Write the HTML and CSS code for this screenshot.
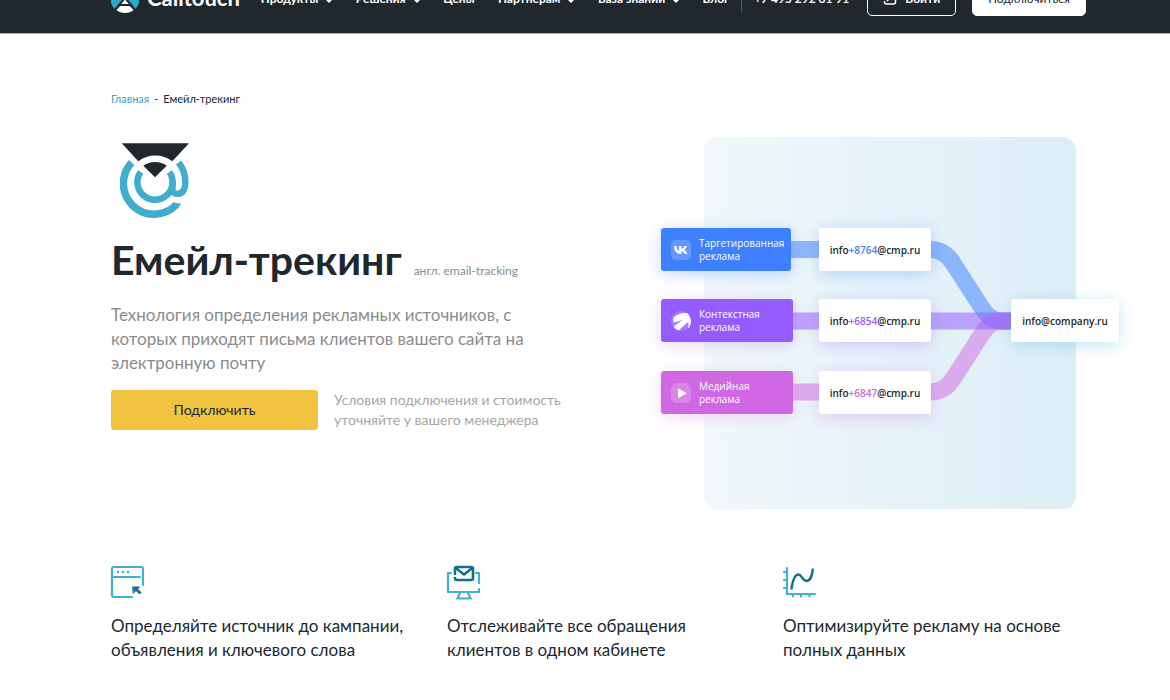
FILE: index.html
```html
<!DOCTYPE html>
<html lang="ru">
<head>
<meta charset="utf-8">
<title>Емейл-трекинг</title>
<link rel="stylesheet" href="styles.css">
</head>
<body>
<header class="header">
  <div class="header-inner">
    <a class="logo" href="#">
      <svg class="logo-mark" viewBox="0 0 28 28" aria-hidden="true">
        <circle cx="14" cy="14" r="14" fill="#fff"/>
        <path d="M14 14 4 4A14 14 0 0 0 4.500 24.500ZM14 14 24 4A14 14 0 0 1 23.500 24.500Z" fill="#2ba9c9"/>
        <path d="M3 2 25 26M25 2 3 26" stroke="#20282e" stroke-width="2.500"/>
        <path d="M14 13 20 20H8Z" fill="#fff" stroke="#20282e" stroke-width="2"/>
      </svg>
      <span>Calltouch</span>
    </a>
    <nav class="nav">
      <a class="has-menu" href="#">Продукты</a>
      <a class="has-menu" href="#">Решения</a>
      <a href="#">Цены</a>
      <a class="has-menu" href="#">Партнерам</a>
      <a class="has-menu" href="#">База знаний</a>
      <a href="#">Блог</a>
    </nav>
    <a class="phone" href="tel:+74952926191">+7 495 292 61 91</a>
    <button class="btn btn-login" type="button">
      <svg viewBox="0 0 14 14" width="14" height="14" fill="none" stroke="#fff" stroke-width="1.500" aria-hidden="true"><path d="M1.500 5V3q0-2 2-2h7q2 0 2 2v8q0 2-2 2h-7q-2 0-2-2v-1M4 10l4-4M5 6h3v3"/></svg>
      <span>Войти</span>
    </button>
    <button class="btn btn-join" type="button">Подключиться</button>
  </div>
</header>

<main class="page">
  <nav class="crumbs"><a href="#">Главная</a><span>-</span><span>Емейл-трекинг</span></nav>

  <section class="hero">
    <div class="hero-text">
      <svg class="hero-icon" viewBox="0 0 70 76" aria-hidden="true">
        <path d="M1.700 1.300H69L52.300 19.300A28 28 0 0 0 18.300 19.300Z" fill="#20282e"/>
        <path d="M35 35.300 23.300 23.800A20 20 0 0 1 46.700 23.800Z" fill="#20282e"/>
        <g fill="none" stroke="#3fadcd">
          <path stroke-width="7.500" d="M11.700 20.500A30.400 30.400 0 0 0 56.500 62.500"/>
          <path stroke-width="6.500" d="M20.600 30A17.600 17.600 0 1 0 49.400 30"/>
          <path stroke-width="6.500" d="M52.500 40V48C52.500 51 55.500 52 58.500 51.700C63.500 51.200 65.300 46 65.300 40.500A31 31 0 0 0 58.500 20.500"/>
        </g>
        <path d="M53.500 60Q57 61.800 61.500 61.300Q60 63.500 57.500 66L53 63Z" fill="#3fadcd"/>
      </svg>
      <div class="title-row">
        <h1>Емейл-трекинг</h1>
        <span class="title-note">англ. email-tracking</span>
      </div>
      <p class="lead">Технология определения рекламных источников, с которых приходят письма клиентов вашего сайта на электронную почту</p>
      <div class="cta-row">
        <button class="cta" type="button">Подключить</button>
        <p class="cta-note">Условия подключения и стоимость уточняйте у вашего менеджера</p>
      </div>
    </div>

    <div class="diagram">
      <svg class="pipes" viewBox="0 0 372 372" fill="none" stroke-width="17" aria-hidden="true">
        <path stroke="#3f80ff" stroke-opacity=".53" d="M80 112.500H226C236 112.500 244 118 249 126L276 168C283 179 288 184 299 184H320"/>
        <path stroke="#d067e3" stroke-opacity=".5" d="M80 255H226C236 255 244 250 249 242L276 200C283 189 288 184 299 184H320"/>
        <path stroke="#945cff" stroke-opacity=".53" d="M80 184H320"/>
      </svg>
      <div class="node source vk">
        <svg viewBox="0 0 20 20" aria-hidden="true"><rect width="20" height="20" rx="5" fill="#fff" fill-opacity=".2"/><path d="M3 6h2.600c.1 3.200 1.300 4.700 2.500 5V6h2.400v2.900c1.300-.2 2.400-1.500 2.900-2.900h2.400c-.4 1.800-1.600 3.100-2.600 3.900 1.200.6 2.600 1.800 3.200 4h-2.700c-.5-1.500-1.600-2.500-3.200-2.700v2.700h-.4C5.700 13.900 3.200 11.100 3 6Z" fill="#fff"/></svg>
        <span>Таргетированная реклама</span>
      </div>
      <div class="node source context">
        <svg viewBox="0 0 20 20" aria-hidden="true"><circle cx="10" cy="10" r="10" fill="#fff" fill-opacity=".2"/><path d="M3 6C7 3 12 1.500 16.500 2.300 19 5 20.500 9 19.700 12.500 19 15 18 17 16.700 17.700 17.600 15 18 12.500 17 11L7.500 19.500Q4 18.500 2.800 15.500L11.500 9 3.200 11.500Q1.500 9 3 6Z" fill="#fff"/></svg>
        <span>Контекстная реклама</span>
      </div>
      <div class="node source media">
        <svg viewBox="0 0 20 20" aria-hidden="true"><rect width="20" height="20" rx="6" fill="#fff" fill-opacity=".2"/><path d="M7.500 6v8.500L15 10.200Z" fill="#fff" stroke="#fff" stroke-linejoin="round"/></svg>
        <span>Медийная реклама</span>
      </div>
      <div class="node mail mail-vk">info<b>+8764</b>@cmp.ru</div>
      <div class="node mail mail-context">info<b>+6854</b>@cmp.ru</div>
      <div class="node mail mail-media">info<b>+6847</b>@cmp.ru</div>
      <div class="node mail mail-main">info@company.ru</div>
    </div>
  </section>

  <section class="features">
    <article class="feature">
      <svg viewBox="0 0 34 34" fill="none" stroke="#3fb0d0" stroke-width="2.200" stroke-linecap="round" aria-hidden="true">
        <path d="M32 19V3q0-2-2-2H3Q1 1 1 3v26q0 2 2 2h18M2 11h27"/>
        <path d="M7 6h.1M12 6h.1M17 6h.1" stroke-width="2.400"/>
        <path d="M22 21H28.500L26.500 23 30 26.500 28.500 28 25 24.500 22.500 27Z" fill="#156f8c" stroke="#156f8c" stroke-width="1"/>
      </svg>
      <h2>Определяйте источник до кампании, объявления и ключевого слова</h2>
    </article>
    <article class="feature">
      <svg viewBox="0 0 34 34" fill="none" stroke="#3fb0d0" stroke-width="2.200" stroke-linecap="round" stroke-linejoin="round" aria-hidden="true">
        <path d="M4 7H1v19h31v-3M29 7h3v10M13 27l-2.500 5.500h13L21 27M10 32.500h14"/>
        <path d="M8 8V3q0-2 2-2h14q2 0 2 2v9q0 2-2 2H10q-2 0-2-2M10 3l7 5.500L24 3" stroke="#156f8c" stroke-width="2.600"/>
      </svg>
      <h2>Отслеживайте все обращения клиентов в одном кабинете</h2>
    </article>
    <article class="feature">
      <svg viewBox="0 0 34 34" fill="none" stroke="#3fb0d0" stroke-width="2.200" stroke-linecap="round" aria-hidden="true">
        <path d="M4 2v26h28M1 6h3M1 14h3M1 22h3M10 28v2.500M18 28v2.500M26.500 28v2.500"/>
        <path d="M8.500 22.500C10 13 12 8.500 15.500 8.500S19 15 23.500 15 29 9 29.800 3.500" stroke="#156f8c" stroke-width="2.400"/>
      </svg>
      <h2>Оптимизируйте рекламу на основе полных данных</h2>
    </article>
  </section>
</main>
</body>
</html>
```
FILE: styles.css
```css
* { box-sizing: border-box; }
body {
  margin: 0;
  background: #fff;
  color: #20282e;
  font-family: Lato, "Noto Sans", sans-serif;
  overflow: hidden;
}
h1, h2, p { margin: 0; }
a { color: inherit; text-decoration: none; }
button { font: inherit; cursor: pointer; }

/* The bar is partly scrolled out of view */
.header {
  margin-top: -35px;
  border-bottom: 1px solid #a6a9ab;
  background: #20282e;
  color: #fff;
}
.header-inner {
  display: flex;
  align-items: center;
  height: 68px;
  padding: 0 84px 0 111px;
  white-space: nowrap;
}
.logo {
  display: flex;
  align-items: center;
  gap: 8px;
  font-size: 22px;
  line-height: 26px;
  font-weight: 700;
}
.logo-mark { width: 28px; height: 28px; }
.logo span { padding-bottom: 3px; }
.nav {
  display: flex;
  flex: 1;
  justify-content: space-between;
  margin: 0 12px 0 21px;
  padding-bottom: 2px;
  font-size: 12px;
  font-weight: 700;
}
.has-menu::after {
  content: "";
  display: inline-block;
  margin-left: 8px;
  border: 3px solid transparent;
  border-top-color: #fff;
  border-bottom: 0;
}
.phone {
  padding: 4px 18px 6px 12px;
  border-left: 1px solid #535a5f;
  font-size: 12px;
  font-weight: 700;
}
.btn {
  display: flex;
  align-items: center;
  justify-content: center;
  gap: 8px;
  height: 34px;
  padding: 0 15px 2px;
  border: 1px solid #fff;
  border-radius: 5px;
  background: transparent;
  color: #fff;
  font-size: 12px;
}
.btn-login { font-weight: 700; }
.btn-join { margin-left: 16px; background: #fff; color: #20282e; }

.page { padding: 0 84px 0 111px; }
.crumbs {
  display: flex;
  gap: 5px;
  padding-top: 57px;
  font-size: 11px;
  line-height: 16px;
}
.crumbs a { color: #3fa3c6; }

.hero {
  display: flex;
  justify-content: space-between;
  padding: 30px 10px 0 0;
}
.hero-text { width: 460px; padding-top: 5px; }
.hero-icon { display: block; width: 70px; height: 76px; margin-left: 9px; }
.title-row {
  display: flex;
  align-items: baseline;
  gap: 12px;
  margin-top: 18px;
  white-space: nowrap;
}
h1 { font-size: 41px; line-height: 48px; font-weight: 700; }
.title-note { color: #8c8c8c; font-size: 12px; }
.lead {
  width: 430px;
  margin-top: 19px;
  color: #8c8c8c;
  font-size: 17px;
  line-height: 24px;
}
.cta-row { display: flex; align-items: center; gap: 16px; margin-top: 15px; }
.cta {
  flex: none;
  width: 207px;
  height: 40px;
  padding: 0 0 2px;
  border: 0;
  border-radius: 3px;
  background: #f2c341;
  color: #20282e;
  font-size: 14px;
}
.cta-note { color: #a6a6a6; font-size: 14px; line-height: 20px; }

.diagram {
  position: relative;
  flex: none;
  width: 372px;
  height: 372px;
  border-radius: 13px;
  background: linear-gradient(90deg, #f2f8f9, #e7f3f9 45%, #ddeef7);
}
.pipes { position: absolute; inset: 0; width: 100%; height: 100%; }
.node {
  position: absolute;
  display: flex;
  align-items: center;
  height: 43px;
  border-radius: 3px;
  font-family: "Open Sans", "Noto Sans", sans-serif;
  font-size: 10px;
}
.source {
  left: -43px;
  width: 132px;
  gap: 8px;
  padding: 0 0 0 10px;
  color: #fff;
  line-height: 13px;
}
.source svg { flex: none; width: 20px; height: 20px; }
.source span { width: 90px; }
.vk { top: 91px; width: 130px; background: #3f80ff; box-shadow: 0 3px 16px #3f80ff50; }
.context { top: 162px; background: #945cff; box-shadow: 0 3px 16px #945cff40; }
.media { top: 234px; background: #d067e3; box-shadow: 0 3px 16px #d067e340; }
.mail {
  left: 115px;
  width: 112px;
  justify-content: center;
  background: #fff;
  font-weight: 600;
}
.mail b { font-weight: 600; }
.mail-vk { top: 91px; box-shadow: 0 3px 16px #3f80ff50; }
.mail-vk b { color: #3f80ff; }
.mail-context { top: 162px; box-shadow: 0 3px 16px #945cff50; }
.mail-context b { color: #945cff; }
.mail-media { top: 234px; box-shadow: 0 3px 16px #d067e350; }
.mail-media b { color: #d067e3; }
.mail-main { top: 162px; left: 307px; width: 108px; box-shadow: 0 3px 16px #3fb0d050; }

.features {
  display: grid;
  grid-template-columns: repeat(3, minmax(0, 1fr));
  gap: 33px;
  margin-top: 57px;
}
.feature svg { display: block; width: 34px; height: 34px; overflow: visible; }
.feature h2 {
  margin-top: 14px;
  font-size: 17px;
  line-height: 24px;
  font-weight: 400;
}
```
